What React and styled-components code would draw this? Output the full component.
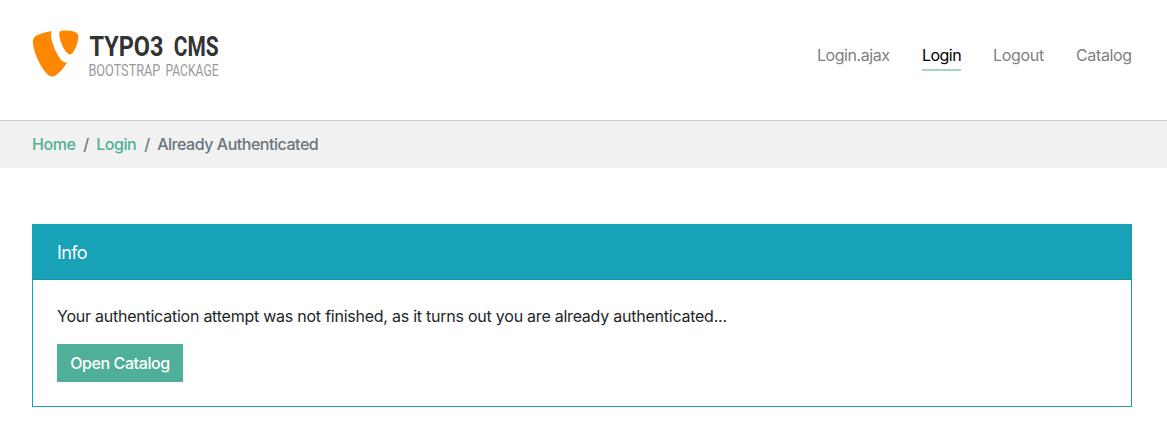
import React from "react";
import styled, { createGlobalStyle } from "styled-components";

const GlobalStyle = createGlobalStyle`
  *, *::before, *::after { box-sizing: border-box; }
  body {
    margin: 0;
    background: #fff;
    color: #212529;
    font: 400 16px/24px Inter, "Liberation Sans", sans-serif;
    letter-spacing: -0.24px;
    -webkit-font-smoothing: antialiased;
  }
  a { color: inherit; text-decoration: none; }
`;

const Header = styled.header`
  display: flex;
  justify-content: space-between;
  align-items: flex-start;
  height: 121px;
  padding: 28px 35px 0 32px;
  border-bottom: 1px solid #ccc;
`;

const LogoLink = styled.a`
  display: block;
  svg { display: block; overflow: visible; }
`;

const Nav = styled.nav`
  display: flex;
  gap: 32px;
  padding-top: 15px;
  letter-spacing: -0.4px;
`;

const NavLink = styled.a`
  width: ${(p) => p.$width}px;
  height: 28px;
  white-space: nowrap;
  letter-spacing: ${(p) => p.$tracking}px;
  color: ${(p) => (p.$active ? "#000" : "#808080")};
  border-bottom: 2px solid ${(p) => (p.$active ? "#a2d5c6" : "transparent")};
`;

const Breadcrumb = styled.nav`
  display: flex;
  align-items: center;
  height: 47px;
  padding: 0 32px 1px;
  background: #f1f1f1;
  color: #6c757d;
  font-weight: 500;
  letter-spacing: -0.47px;
`;

const Crumb = styled.span`
  color: ${(p) => (p.$link ? "#50af98" : "#6c757d")};
  &:not(:first-child)::before {
    content: "/";
    color: #6c757d;
    padding: 0 7.5px 0 8px;
  }
`;

const Main = styled.main`
  padding: 56px 35px 32px 32px;
`;

const Card = styled.section`
  height: 183px;
  border: 1px solid #17a2b8;
`;

const CardHeader = styled.h2`
  margin: 0;
  height: 55px;
  padding: 15px 24px;
  background: #17a2b8;
  border-bottom: 1px solid #148ea1;
  color: #fff;
  font-size: 18px;
  font-weight: 400;
  line-height: 26px;
  letter-spacing: -0.6px;
`;

const CardBody = styled.div`
  padding: 24px;
`;

const Message = styled.p`
  margin: 0 0 16px;
`;

const Button = styled.a`
  display: inline-block;
  width: 126px;
  height: 38px;
  padding: 7px 0;
  background: #50af98;
  color: #fff;
  font-weight: 500;
  text-align: center;
  letter-spacing: -0.4px;
`;

const LogoTitle = styled.text`
  fill: #333;
  font: 700 28.5px Roboto, sans-serif;
  letter-spacing: 0;
`;

const LogoSubtitle = styled.text`
  fill: #999;
  font: 400 15.6px Roboto, sans-serif;
  letter-spacing: 0;
`;

function Logo() {
  return (
    <svg width="200" height="56" viewBox="0 0 200 56" role="img" aria-label="TYPO3 CMS Bootstrap Package">
      <g transform="translate(0.6 2.4) scale(1.92)" fill="#ff8700">
        <path d="M18.08 16.539c-.356.105-.64.144-1.012.144-3.048 0-7.524-10.652-7.524-14.197 0-1.305.31-1.74.745-2.114C6.56.808 2.082 2.177.651 3.917c-.31.436-.497 1.12-.497 1.99C.154 11.442 6.06 24 10.228 24c1.928 0 5.178-3.168 7.852-7.461" />
        <path d="M16.134 0c3.855 0 7.713.622 7.713 2.798 0 4.415-2.8 9.765-4.23 9.765-2.549 0-5.72-7.09-5.72-10.635C13.897.311 14.518 0 16.134 0" />
      </g>
      <LogoTitle x="57.5" y="28.3" textLength="74" lengthAdjust="spacingAndGlyphs">TYPO3</LogoTitle>
      <LogoTitle x="141.7" y="28.3" textLength="45" lengthAdjust="spacingAndGlyphs">CMS</LogoTitle>
      <LogoSubtitle x="56.4" y="47.6" textLength="72" lengthAdjust="spacingAndGlyphs">BOOTSTRAP</LogoSubtitle>
      <LogoSubtitle x="133.4" y="47.6" textLength="53.2" lengthAdjust="spacingAndGlyphs">PACKAGE</LogoSubtitle>
    </svg>
  );
}

export default function App() {
  return (
    <>
      <GlobalStyle />
      <Header>
        <LogoLink href="#"><Logo /></LogoLink>
        <Nav>
          <NavLink href="#" $width={73} $tracking={-0.45}>Login.ajax</NavLink>
          <NavLink href="#" $width={39} $tracking={-0.55} $active>Login</NavLink>
          <NavLink href="#" $width={51} $tracking={-0.3}>Logout</NavLink>
          <NavLink href="#" $width={56} $tracking={-0.35}>Catalog</NavLink>
        </Nav>
      </Header>
      <Breadcrumb>
        <Crumb $link><a href="#">Home</a></Crumb>
        <Crumb $link><a href="#">Login</a></Crumb>
        <Crumb>Already Authenticated</Crumb>
      </Breadcrumb>
      <Main>
        <Card>
          <CardHeader>Info</CardHeader>
          <CardBody>
            <Message>Your authentication attempt was not finished, as it turns out you are already authenticated...</Message>
            <Button href="#">Open Catalog</Button>
          </CardBody>
        </Card>
      </Main>
    </>
  );
}
